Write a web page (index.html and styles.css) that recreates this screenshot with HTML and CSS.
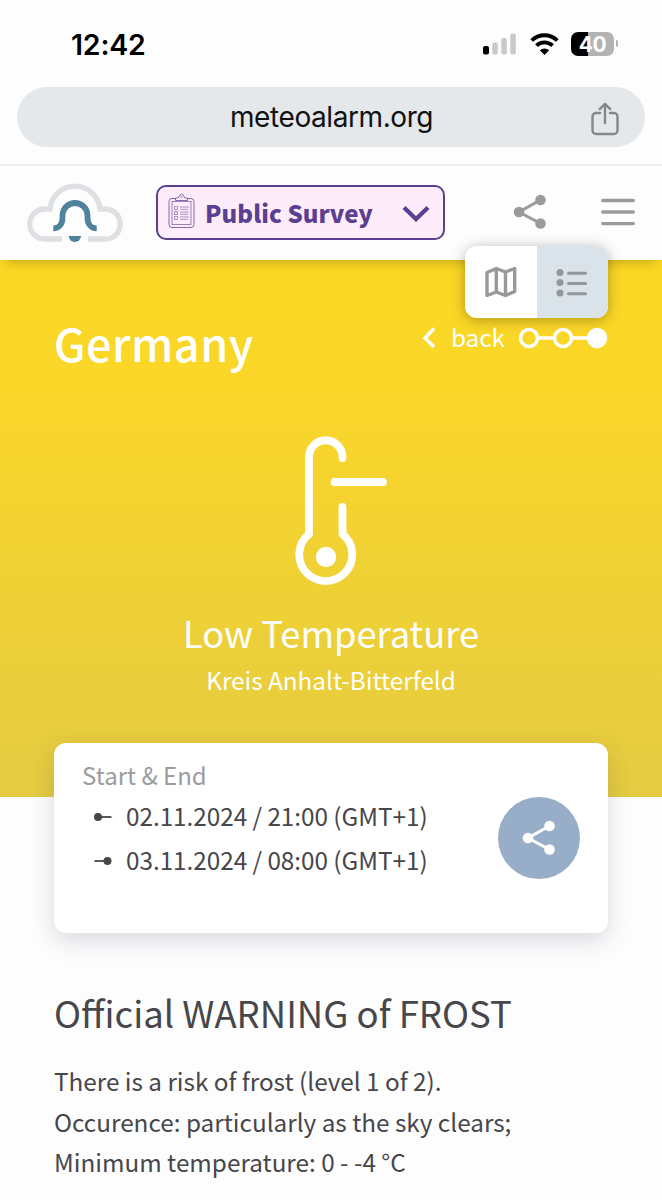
FILE: index.html
```html
<!DOCTYPE html>
<html lang="en">
<head>
<meta charset="utf-8">
<title>Meteoalarm</title>
<link rel="stylesheet" href="styles.css">
</head>
<body>
<div class="status">
  <span class="time">12:42</span>
  <div class="indicators">
    <svg class="signal" width="34" height="22" viewBox="0 0 34 22">
      <rect x="0" y="13" width="6" height="8.500" rx="2" fill="#000"/>
      <rect x="9.300" y="9.500" width="5.500" height="12" rx="2" fill="#c9c9c9"/>
      <rect x="18.300" y="5" width="5.500" height="16.500" rx="2" fill="#c9c9c9"/>
      <rect x="27.300" y="0.500" width="5.500" height="21" rx="2" fill="#c9c9c9"/>
    </svg>
    <svg class="wifi" width="29" height="22" viewBox="0 0 29 22">
      <g fill="none" stroke="#000" stroke-width="3.800">
        <path d="M1.700 7.500a18.200 18.200 0 0 1 25.600 0"/>
        <path d="M6.500 12.700a11.500 11.500 0 0 1 16 0"/>
      </g>
      <path d="M9.800 17.300a7 7 0 0 1 9.400 0l-4.700 4.700z" fill="#000"/>
    </svg>
    <div class="battery"><span class="level">40</span><i class="cap"></i></div>
  </div>
</div>
<div class="address">
  <span class="host">meteoalarm.org</span>
  <svg class="export" width="28" height="34" viewBox="0 0 28 34" fill="none" stroke="#85888b" stroke-width="2.400" stroke-linecap="round" stroke-linejoin="round">
    <path d="M9 11H5a3.500 3.500 0 0 0-3.500 3.500v14A3.500 3.500 0 0 0 5 32h18a3.500 3.500 0 0 0 3.500-3.500v-14A3.500 3.500 0 0 0 23 11h-4"/>
    <path d="M14 21V2M8.700 7.200L14 1.800l5.300 5.400"/>
  </svg>
</div>
<header class="header">
  <svg class="logo" width="98" height="62" viewBox="0 0 98 62" fill="none">
    <path d="M36 58H18.700A15 15 0 0 1 18.700 28H24A25.100 25.100 0 0 1 74 28H79.300A15 15 0 0 1 79.300 58H62" stroke="#dfe0e3" stroke-width="5.400"/>
    <path d="M27.300 47.300C33 47.300 36.500 43 36.500 37V34.500A12.500 12.500 0 0 1 61.500 34.500V37C61.500 43 65 47.300 70.700 47.300" stroke="#4f829d" stroke-width="5.800"/>
    <path d="M42.700 55H55A6.150 6 0 0 1 42.700 55z" fill="#4f829d"/>
  </svg>
  <button class="survey">
    <svg class="clip" width="27" height="36" viewBox="0 0 27 36" fill="none" stroke="#8865ac" stroke-width="1">
      <rect x="1" y="5.500" width="25" height="29" rx="3"/>
      <rect x="4" y="8.500" width="19" height="23" stroke-width=".8"/>
      <path d="M7.500 7.500V5H10L12 2A2 2 0 0 1 15 2L17 5H19.500V7.500z" fill="#fdedfb"/>
      <path d="M12.500 4h2"/>
      <path d="M6.500 13.500h3v3h-3zM6.500 18.500h3v3h-3zM6.500 23.500h3v3h-3zM12 14h9M12 16.300h8M12 19h9M12 21.300h8M12 24h9M12 26.300h8" stroke-width=".7"/>
    </svg>
    <span>Public Survey</span>
    <svg class="chev" width="28" height="18" viewBox="0 0 28 18" fill="none" stroke="#5b4091" stroke-width="4.300"><path d="M2 2.500L14 14L26 2.500"/></svg>
  </button>
  <svg class="share" width="34" height="36" viewBox="0 0 34 36"><path d="M27.500 6L6 18L27.500 29.500" fill="none" stroke="#9b9b9b" stroke-width="3"/><g fill="#9b9b9b"><circle cx="27.500" cy="6" r="5.300"/><circle cx="6" cy="18" r="5.300"/><circle cx="27.500" cy="29.500" r="5.300"/></g></svg>
  <svg class="menu" width="34" height="28" viewBox="0 0 34 28" stroke="#9b9b9b" stroke-width="3.300" stroke-linecap="round"><path d="M1.700 2.500H32.300M1.700 14H32.300M1.700 25.600H32.300"/></svg>
  <div class="switch">
    <div class="tab"><svg width="32" height="32" viewBox="0 0 32 32" fill="none" stroke="#999" stroke-width="3.400" stroke-linejoin="round"><path d="M2 6.500L11.300 2.500L20.500 6L29.700 2.500V25.500L20.500 29.500L11.300 26L2 29.500zM11.300 2.500V26M20.500 6V29.500"/></svg></div>
    <div class="tab active"><svg width="32" height="29" viewBox="0 0 32 29"><g fill="#92979e"><circle cx="4" cy="4.500" r="3.500"/><circle cx="4" cy="14.500" r="3.500"/><circle cx="4" cy="25" r="3.500"/></g><path d="M12.500 5.300H29.500M12.500 15.500H29.500M12.500 25.700H29.500" stroke="#92979e" stroke-width="3" stroke-linecap="round"/></svg></div>
  </div>
</header>
<main>
  <section class="hero">
    <div class="crumbs">
      <h1 class="country">Germany</h1>
      <a class="back">
        <svg width="14" height="22" viewBox="0 0 14 22" fill="none" stroke="#fff" stroke-width="3.500"><path d="M12 2.500L3 12L12 21"/></svg>
        <span>back</span>
        <svg class="steps" width="90" height="22" viewBox="0 0 90 22" fill="none" stroke="#fff" stroke-width="3.500"><path d="M20 11H36M54 11H70"/><circle cx="11" cy="11" r="8.500"/><circle cx="45" cy="11" r="8.500"/><circle cx="79" cy="11" r="8.500" fill="#fff"/></svg>
      </a>
    </div>
    <svg class="thermo" width="94" height="150" viewBox="0 0 94 150" fill="none" stroke="#fff" stroke-width="7.800" stroke-linecap="round" stroke-linejoin="round">
      <path d="M49.500 22V21A16.700 16.700 0 0 0 16 21V98A26.500 26.500 0 1 0 49.500 98V71M41.500 46H90"/>
      <circle cx="33" cy="121" r="10.200" fill="#fff" stroke="none"/>
    </svg>
    <h2 class="kind">Low Temperature</h2>
    <p class="region">Kreis Anhalt-Bitterfeld</p>
  </section>
  <section class="card">
    <div>
      <div class="label">Start &amp; End</div>
      <div class="when"><svg width="18" height="8" viewBox="0 0 18 8"><path d="M4 4H17.500" stroke="#47464a" stroke-width="1.800"/><circle cx="4" cy="4" r="4" fill="#47464a"/></svg><span>02.11.2024 / 21:00 (GMT+1)</span></div>
      <div class="when"><svg width="18" height="8" viewBox="0 0 18 8"><path d="M0.500 4H14" stroke="#47464a" stroke-width="1.800"/><circle cx="13.500" cy="4" r="4" fill="#47464a"/></svg><span>03.11.2024 / 08:00 (GMT+1)</span></div>
    </div>
    <button class="round"><svg width="34" height="36" viewBox="0 0 34 36"><path d="M27.500 6L6 18L27.500 29.500" fill="none" stroke="#fff" stroke-width="3"/><g fill="#fff"><circle cx="27.500" cy="6" r="5.300"/><circle cx="6" cy="18" r="5.300"/><circle cx="27.500" cy="29.500" r="5.300"/></g></svg></button>
  </section>
  <article class="warning">
    <h3>Official WARNING of FROST</h3>
    <p>There is a risk of frost (level 1 of 2).<br>Occurence: particularly as the sky clears;<br>Minimum temperature: 0 - -4 °C</p>
  </article>
</main>
</body>
</html>
```
FILE: styles.css
```css
* { box-sizing: border-box; margin: 0; padding: 0; }
body {
  width: 662px; height: 1200px; overflow: hidden;
  background: #fefdfe; color: #47464a;
  font-family: "Noto Sans CJK SC", "Noto Sans", sans-serif;
  font-size: 24.3px;
}
svg { display: block; flex: none; }
button { border: 0; font: inherit; }
h1, h2, h3 { font-weight: 400; }

.status {
  height: 87px; padding: 0 45px 0 71px;
  display: flex; align-items: center; justify-content: space-between;
  font-family: Inter, sans-serif; color: #000;
}
.time { padding-top: 2px; font-size: 28.500px; font-weight: 600; line-height: 40px; letter-spacing: -.2px; }
.indicators { display: flex; align-items: center; }
.wifi { margin-left: 13px; }
.battery { display: flex; align-items: center; gap: 2px; margin-left: 12px; margin-right: -1px; }
.level {
  width: 43px; height: 24px; border-radius: 7px;
  background: linear-gradient(90deg, #000 17px, #b3b3b3 17px);
  color: #fff; font-size: 21px; font-weight: 700; line-height: 25px; text-align: center;
  letter-spacing: -.5px;
}
.cap { width: 2px; height: 7px; border-radius: 0 3px 3px 0; background: #b3b3b3; }

.address {
  height: 60px; margin: 0 17px; padding: 0 26px 0 213px;
  display: flex; align-items: center; justify-content: space-between;
  border-radius: 30px; background: #e5e8eb;
}
.host { font: 400 28px/40px Inter, sans-serif; letter-spacing: -.42px; color: #111; white-space: nowrap; }
.export { margin-top: 4px; }

.header {
  position: relative; z-index: 2; height: 96px; margin-top: 17px;
  padding: 0 27px 2px 26px; display: flex; align-items: center;
  border-top: 2px solid #ededee; background: #fefdfe;
  box-shadow: 0 8px 10px -6px rgba(60, 50, 0, .3);
}
.survey {
  width: 289px; height: 55px; margin-left: 32px; padding: 0 13px 0 10px;
  display: flex; align-items: center;
  border: 2px solid #5b4091; border-radius: 10px; background: #fdedfb;
  color: #5b4091; font-size: 24px; font-weight: 900; line-height: 36px; white-space: nowrap;
}
.survey span { margin-left: 10px; padding-top: 2px; letter-spacing: .05px; }
.clip { margin-top: -2px; }
.chev { margin-left: auto; margin-top: 4px; }
.share { margin-left: 68px; }
.menu { margin-left: 54px; }
.switch {
  position: absolute; top: 80px; left: 465px; width: 143px; height: 72px;
  display: flex; overflow: hidden; border-radius: 12px; background: #fff;
}
.header::after {
  content: ""; position: absolute; z-index: -1; top: 80px; left: 465px;
  width: 143px; height: 72px; border-radius: 12px; box-shadow: 0 2px 14px rgba(0, 0, 0, .3);
}
.tab { flex: 1; display: flex; align-items: center; justify-content: center; }
.active { background: #dae3e9; }

.hero {
  height: 537px; padding: 59px 54px 0;
  display: flex; flex-direction: column; align-items: center;
  background: linear-gradient(#fbd823 0, #fad629 25%, #e4cb42 100%);
  color: #fff;
}
.crumbs { width: 100%; display: flex; justify-content: space-between; align-items: flex-start; }
.country { font-size: 45px; font-weight: 500; line-height: 48px; letter-spacing: .5px; }
.back { display: flex; align-items: center; line-height: 36px; }
.back span { margin: 0 13px 0 15px; }
.steps { margin-top: 2px; }
.thermo { margin: 69px 0 0 18px; }
.kind { margin-top: 22px; font-size: 36.300px; line-height: 48px; }
.region { margin-top: 6px; line-height: 36px; }

.card {
  position: relative; height: 190px; margin: -54px 54px 0; padding: 14px 28px;
  display: flex; justify-content: space-between; align-items: center;
  border-radius: 12px; background: #fff;
  box-shadow: 0 8px 24px rgba(60, 50, 70, .18);
}
.card > div { align-self: flex-start; }
.label { margin-bottom: 2px; color: #9c9b9f; line-height: 35px; font-size: 24px; }
.when { height: 44px; padding-left: 12px; display: flex; align-items: center; gap: 14px; line-height: 44px; white-space: nowrap; letter-spacing: -.03px; }
.when svg { margin-top: 2px; }
.round {
  width: 82px; height: 82px; border-radius: 50%; background: #98adc7;
  display: flex; align-items: center; justify-content: center;
}
.warning { padding: 56px 54px 0; white-space: nowrap; }
.warning h3 { font-size: 36.500px; line-height: 48px; }
.warning p { margin-top: 24px; line-height: 40.700px; }
```
